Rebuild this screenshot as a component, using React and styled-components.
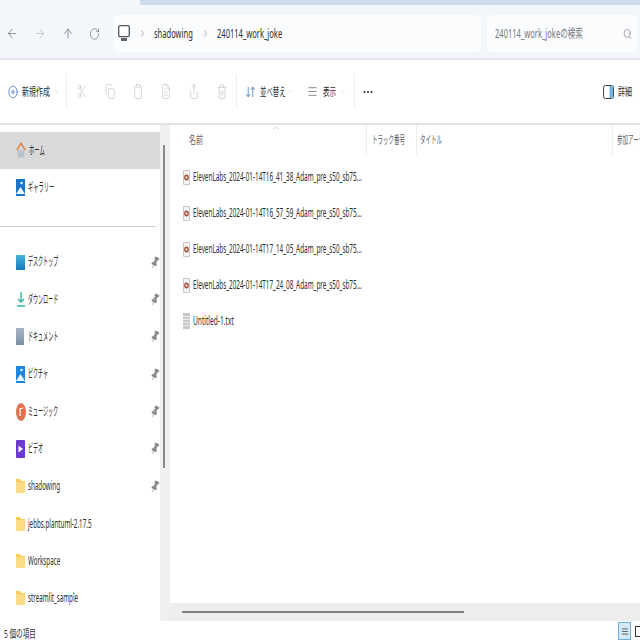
import React from 'react';
import styled, { createGlobalStyle } from 'styled-components';
import { ArrowLeft, ArrowRight, ArrowUp, RotateCw, ChevronRight, ChevronDown, ChevronUp, Search, Scissors, Copy, Clipboard, FileText, Share, Trash2, ArrowDownUp, Menu, Ellipsis, CirclePlus, Pin } from 'lucide-react';

const Global = createGlobalStyle`
  html, body { margin: 0; padding: 0; background: #fff; }
  body { width: 640px; height: 640px; overflow: hidden; font-family: "Noto Sans", "Noto Sans CJK JP", sans-serif; }
  #root { width: 640px; height: 640px; }
`;
const Window = styled.div`width: 640px; height: 640px; display: flex; flex-direction: column; overflow: hidden; background: #fff;`;
const TitleStrip = styled.div`height: 5px; flex: none; display: flex; background: #cddded;`;
const ActiveTab = styled.div`width: 140px; background: #f3f6fa;`;
const NavBar = styled.div`height: 55px; flex: none; box-sizing: border-box; display: flex; align-items: center; padding: 4px 3px 0 0; background: #f3f6fa; border-bottom: 2px solid #e3e6ea;`;
const NavSlot = styled.div`width: ${p => p.$w}px; flex: none; margin-left: ${p => p.$ml || 0}px; display: flex; justify-content: center; color: ${p => p.$c || '#6d7278'};`;
const AddressBox = styled.div`width: 368px; height: 37px; flex: none; margin-left: 3px; display: flex; align-items: center; background: #fbfcfe; border-radius: 4px;`;
const SearchBox = styled.div`width: 150px; height: 37px; flex: none; margin-left: 6px; box-sizing: border-box; padding: 0 5px 0 8px; display: flex; align-items: center; justify-content: space-between; background: #fbfcfe; border-radius: 4px; color: #7b7f84;`;
const Squeezed = styled.span`
  display: block; width: ${p => p.$w}px; flex: none; white-space: nowrap;
  font-size: ${p => p.$s || 12}px; line-height: 16px; color: ${p => p.$c || '#2e2e2e'};
  transform: scaleX(${p => p.$x || 0.62}); transform-origin: left center;
`;
const ToolBar = styled.div`height: 65px; flex: none; box-sizing: border-box; display: flex; align-items: center; padding-left: 8px; background: #fff; border-bottom: 2px solid #dfe3e8;`;
const ToolSep = styled.div`width: 1px; height: 35px; flex: none; background: #eceef0; margin: 0 ${p => p.$r || 0}px 0 ${p => p.$l || 0}px;`;
const ToolIcon = styled.div`width: 28px; flex: none; display: flex; justify-content: center; color: #c4c8cc;`;
const Glyph = styled.div`flex: none; display: flex; color: ${p => p.$c || '#44494e'}; margin-right: ${p => p.$m || 0}px;`;
const Body = styled.div`flex: 1; display: flex; min-height: 0;`;
const Sidebar = styled.nav`width: 160px; flex: none; box-sizing: border-box; padding-top: 7px; background: #fff;`;
const SideRow = styled.div`
  height: 37.33px; box-sizing: border-box; display: flex; align-items: center; padding: 0 0 0 16px;
  background: ${p => p.$on ? '#d9d9d9' : 'transparent'}; position: relative;
`;
const SideLabel = styled(Squeezed)`margin-left: -2px;`;
const Divider = styled.div`height: 1px; margin: 19px 4px 17px 0; background: #cfd2d5;`;
const PinMark = styled.div`position: absolute; right: 1px; top: 12px; display: flex; color: #8a8a8a; transform: rotate(25deg);`;
const SideTrack = styled.div`width: 10px; flex: none; background: #f0f0f0; display: flex; justify-content: center; padding-top: 20px; box-sizing: border-box;`;
const SideThumb = styled.div`width: 2px; height: 323px; margin-left: -2px; background: #8a8a8a;`;
const Main = styled.main`flex: 1; min-width: 0; display: flex; flex-direction: column; position: relative;`;
const HeaderRow = styled.div`height: 30px; flex: none; display: flex; align-items: center; overflow: hidden; color: #5b6066;`;
const Column = styled.div`width: ${p => p.$w}px; height: 30px; flex: none; box-sizing: border-box; display: flex; align-items: center; padding-left: ${p => p.$p}px; border-right: ${p => p.$last ? 'none' : '1px solid #eceef0'};`;
const SortMark = styled.div`position: absolute; left: 101px; top: 0; color: #8a8f94; display: flex;`;
const FileList = styled.div`flex: 1; padding-top: 4px;`;
const FileRow = styled.div`height: 36px; display: flex; align-items: center; padding-left: 13px;`;
const HScroll = styled.div`height: 18px; flex: none; background: #eeeeee; display: flex; align-items: center; padding-left: 12px;`;
const HThumb = styled.div`width: 282px; height: 2px; background: #808080;`;
const StatusBar = styled.footer`height: 19px; flex: none; box-sizing: border-box; display: flex; align-items: center; justify-content: space-between; padding: 7px 0 0 4px; background: #fff;`;
const Views = styled.div`display: flex; align-self: flex-end; gap: 2px; margin-right: -5px;`;
const ViewBtn = styled.div`width: ${p => p.$on ? 13 : 12}px; height: 18px; box-sizing: border-box; display: flex; align-items: center; justify-content: center; background: ${p => p.$on ? '#d4e8f5' : '#fff'}; border: 1px solid ${p => p.$on ? '#6db2dc' : 'transparent'}; color: #333;`;
const Tile = styled.div`width: ${p => p.$w || 10}px; height: ${p => p.$h || 16}px; flex: none; margin-right: ${p => p.$m ?? 3}px; background: ${p => p.$bg};`;
const OutlineBox = styled.div`width: 8px; height: 11px; box-sizing: border-box; border: 1px solid #333;`;
const IconSvg = styled.svg`flex: none; margin-right: ${p => p.$m || 0}px;`;

const sq = { preserveAspectRatio: 'none' };

const Home = () => (
  <IconSvg $m={5} width="10" height="19" viewBox="0 0 12 19"><path d="M2 18V9h8v9z" fill="#b9c3cf" /><path d="M1 9L6 1l5 8" fill="none" stroke="#e2874a" strokeWidth="2" /></IconSvg>
);
const Picture = ({ c = '#1f87de' }) => (
  <IconSvg $m={5} width="9" height="17" viewBox="0 0 9 17"><rect width="9" height="17" fill={c} /><circle cx="5.5" cy="4" r="1.3" fill="#dff1ff" /><path d="M0 15l4.5-7L9 15z" fill="#e8f5ff" /></IconSvg>
);
const Download = () => (
  <IconSvg $m={4} width="10" height="17" viewBox="0 0 10 17"><path d="M5 1v10M2 8l3 3 3-3M1 15h8" fill="none" stroke="#2db49a" strokeWidth="1.3" /></IconSvg>
);
const Music = () => (
  <IconSvg $m={4} width="10" height="18" viewBox="0 0 10 18"><ellipse cx="5" cy="9" rx="5" ry="9" fill="#e0734f" /><path d="M4 13V6l3-1" fill="none" stroke="#fff" strokeWidth="1.2" /></IconSvg>
);
const Video = () => (
  <IconSvg $m={5} width="9" height="18" viewBox="0 0 9 18"><rect width="9" height="18" rx="1" fill="#6d39d1" /><path d="M2.5 5.5L7 9l-4.5 3.5z" fill="#fff" /></IconSvg>
);
const Folder = () => (
  <IconSvg $m={5} width="9" height="14" viewBox="0 0 9 14"><path d="M0 0h4l1 2h4v12H0z" fill="#f6cc5c" /><path d="M0 3h9v11H0z" fill="#fbdc84" /></IconSvg>
);
const AudioFile = () => (
  <IconSvg $m={3} width="7" height="15" viewBox="0 0 7 15"><path d="M.5.5h6v14h-6z" fill="#f4f4f4" stroke="#c8c8c8" /><ellipse cx="3.5" cy="7.5" rx="2.4" ry="3" fill="#b2503f" /><ellipse cx="3.5" cy="7.5" rx="1" ry="1.3" fill="#eee" /></IconSvg>
);
const TextFile = () => (
  <IconSvg $m={3} width="7" height="16" viewBox="0 0 7 16"><rect width="7" height="16" fill="#c6c8ca" /><path d="M0 3.5h7M0 6.5h7M0 9.5h7M0 12.5h7" stroke="#eee" /></IconSvg>
);
const Details = () => (
  <IconSvg $m={4} width="11" height="14" viewBox="0 0 11 14"><rect x=".5" y=".5" width="10" height="13" rx="2" fill="#fff" stroke="#43484e" /><rect x="6.5" y="1" width="3.5" height="12" fill="#6db6e6" /></IconSvg>
);
const Monitor = () => (
  <IconSvg width="12" height="17" viewBox="0 0 12 17"><rect x=".7" y=".7" width="10.6" height="11" rx="1.5" fill="#fff" stroke="#4f5358" strokeWidth="1.3" /><rect x="3" y="13" width="6" height="3" fill="#5f6368" /></IconSvg>
);

const pinned = [
  ['デスクトップ', <Tile $w={9} $h={15} $m={5} $bg="linear-gradient(#44b3dd,#1379bb)" />],
  ['ダウンロード', <Download />],
  ['ドキュメント', <Tile $w={8} $h={17} $m={6} $bg="linear-gradient(#a8b6c6,#7d8fa5)" />],
  ['ピクチャ', <Picture />],
  ['ミュージック', <Music />],
  ['ビデオ', <Video />],
  ['shadowing', <Folder />],
];
const folders = ['jebbs.plantuml-2.17.5', 'Workspace', 'streamlit_sample'];
const files = [
  'ElevenLabs_2024-01-14T16_41_38_Adam_pre_s50_sb75...',
  'ElevenLabs_2024-01-14T16_57_59_Adam_pre_s50_sb75...',
  'ElevenLabs_2024-01-14T17_14_05_Adam_pre_s50_sb75...',
  'ElevenLabs_2024-01-14T17_24_08_Adam_pre_s50_sb75...',
];
const actionIcons = [Scissors, Copy, Clipboard, FileText, Share, Trash2];

export default function App() {
  return (
    <Window>
      <Global />
      <TitleStrip><ActiveTab /></TitleStrip>
      <NavBar>
        <NavSlot $w={23}><ArrowLeft {...sq} width={12} height={15} strokeWidth={1.3} /></NavSlot>
        <NavSlot $w={33} $c="#b7bbc0"><ArrowRight {...sq} width={12} height={15} strokeWidth={1.3} /></NavSlot>
        <NavSlot $w={23}><ArrowUp {...sq} width={12} height={15} strokeWidth={1.3} /></NavSlot>
        <NavSlot $w={31}><RotateCw {...sq} width={11} height={14} strokeWidth={1.3} /></NavSlot>
        <AddressBox>
          <NavSlot $w={14} $ml={4}><Monitor /></NavSlot>
          <NavSlot $w={23}><ChevronRight {...sq} width={7} height={11} strokeWidth={1.4} /></NavSlot>
          <Squeezed $w={39} $x={0.63}>shadowing</Squeezed>
          <NavSlot $w={24}><ChevronRight {...sq} width={7} height={11} strokeWidth={1.4} /></NavSlot>
          <Squeezed $w={70} $x={0.63}>240114_work_joke</Squeezed>
        </AddressBox>
        <SearchBox>
          <Squeezed $w={90} $c="#73777c" $x={0.63}>240114_work_jokeの検索</Squeezed>
          <Search {...sq} width={9} height={12} strokeWidth={1.5} />
        </SearchBox>
      </NavBar>
      <ToolBar>
        <Glyph $m={4} $c="#2f6db0"><CirclePlus {...sq} width={10} height={14} strokeWidth={1.4} /></Glyph>
        <Squeezed $w={32} $s={11} $x={0.64}>新規作成</Squeezed>
        <Glyph $m={7} $c="#aab0b5"><ChevronDown {...sq} width={5} height={5} /></Glyph>
        <ToolSep $r={1} />
        {actionIcons.map((I, k) => (
          <ToolIcon key={k}><I {...sq} width={10} height={17} strokeWidth={1.3} /></ToolIcon>
        ))}
        <ToolSep $r={8} />
        <Glyph $m={4} $c="#3f6f9c"><ArrowDownUp {...sq} width={11} height={14} strokeWidth={1.4} /></Glyph>
        <Squeezed $w={28} $s={11} $x={0.58}>並べ替え</Squeezed>
        <Glyph $m={14} $c="#aab0b5"><ChevronDown {...sq} width={5} height={5} /></Glyph>
        <Glyph $m={5}><Menu {...sq} width={11} height={13} strokeWidth={1.3} /></Glyph>
        <Squeezed $w={17} $s={11} $x={0.6}>表示</Squeezed>
        <Glyph $m={9} $c="#aab0b5"><ChevronDown {...sq} width={5} height={5} /></Glyph>
        <ToolSep $r={7} />
        <Glyph $m={229} $c="#333"><Ellipsis {...sq} width={12} height={12} strokeWidth={2.4} /></Glyph>
        <Details />
        <Squeezed $w={15} $s={11} $x={0.64}>詳細</Squeezed>
      </ToolBar>
      <Body>
        <Sidebar>
          <SideRow $on><Home /><SideLabel $w={30} $s={12} $x={0.44}>ホーム</SideLabel></SideRow>
          <SideRow><Picture c="#1a74c9" /><SideLabel $w={30} $s={12} $x={0.44}>ギャラリー</SideLabel></SideRow>
          <Divider />
          {pinned.map(([label, icon]) => (
            <SideRow key={label}>
              {icon}
              <SideLabel $w={50} $s={12} $x={label === 'shadowing' ? 0.52 : 0.42}>{label}</SideLabel>
              <PinMark><Pin {...sq} width={8} height={13} strokeWidth={1.5} fill="#8a8a8a" /></PinMark>
            </SideRow>
          ))}
          {folders.map(f => (
            <SideRow key={f}><Folder /><SideLabel $w={60} $x={0.52}>{f}</SideLabel></SideRow>
          ))}
        </Sidebar>
        <SideTrack><SideThumb /></SideTrack>
        <Main>
          <HeaderRow>
            <Column $w={197} $p={19}><Squeezed $w={20} $s={11} $c="#5b6066" $x={0.64}>名前</Squeezed></Column>
            <Column $w={50} $p={5}><Squeezed $w={50} $s={11} $c="#5b6066" $x={0.5}>トラック番号</Squeezed></Column>
            <Column $w={196} $p={3}><Squeezed $w={30} $s={11} $c="#5b6066" $x={0.5}>タイトル</Squeezed></Column>
            <Column $w={60} $p={4} $last><Squeezed $w={50} $s={11} $c="#5b6066" $x={0.5}>参加アーティスト</Squeezed></Column>
          </HeaderRow>
          <SortMark><ChevronUp {...sq} width={9} height={6} strokeWidth={1.3} /></SortMark>
          <FileList>
            {files.map(f => (
              <FileRow key={f}><AudioFile /><Squeezed $w={168} $s={12} $x={0.53}>{f}</Squeezed></FileRow>
            ))}
            <FileRow><TextFile /><Squeezed $w={45} $x={0.55}>Untitled-1.txt</Squeezed></FileRow>
          </FileList>
          <HScroll><HThumb /></HScroll>
        </Main>
      </Body>
      <StatusBar>
        <Squeezed $w={34} $s={11} $x={0.6}>5 個の項目</Squeezed>
        <Views>
          <ViewBtn $on><Menu {...sq} width={8} height={9} strokeWidth={2} /></ViewBtn>
          <ViewBtn><OutlineBox /></ViewBtn>
        </Views>
      </StatusBar>
    </Window>
  );
}
